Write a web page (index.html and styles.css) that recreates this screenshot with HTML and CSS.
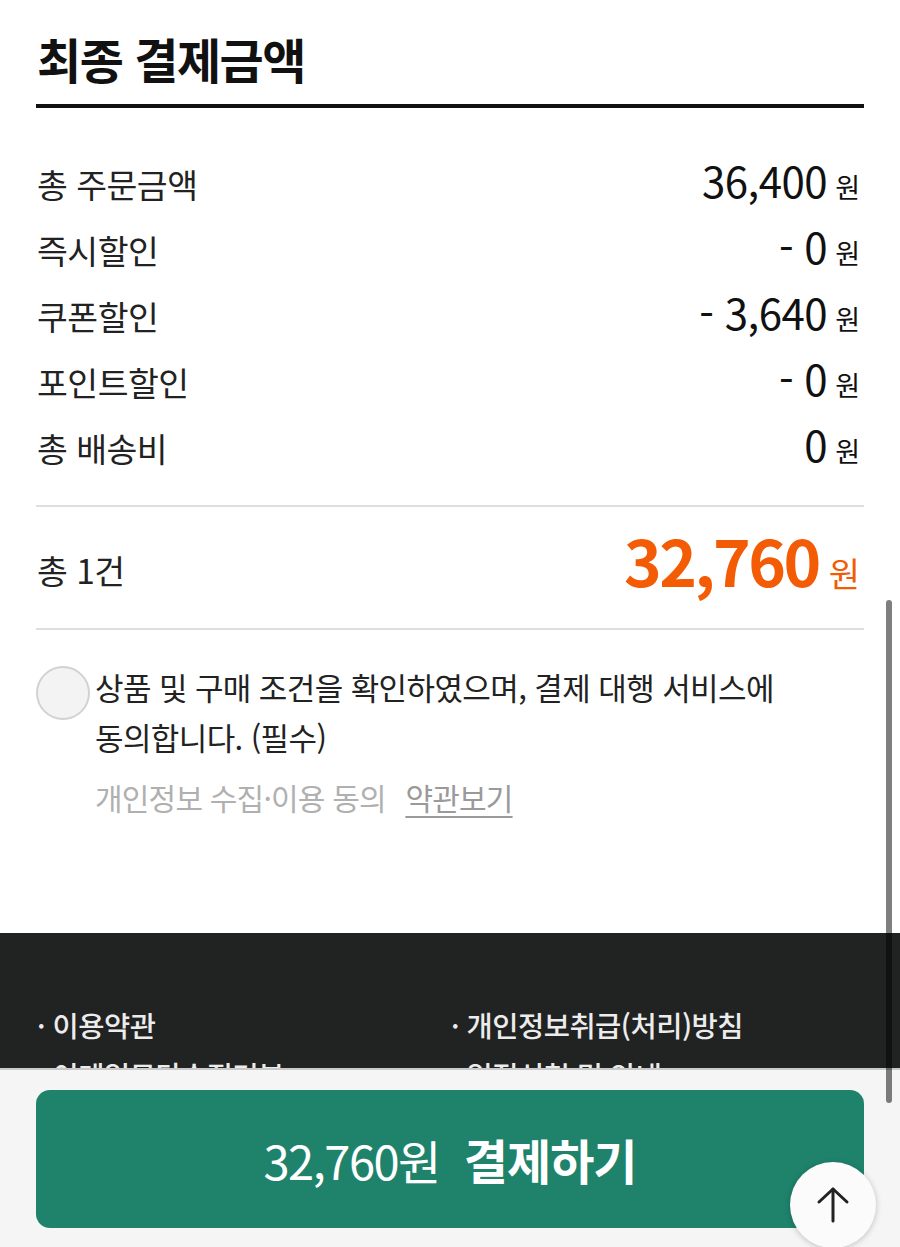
FILE: index.html
```html
<!DOCTYPE html>
<html lang="ko">
<head>
<meta charset="utf-8">
<title>최종 결제금액</title>
<link rel="stylesheet" href="styles.css">
</head>
<body>
<div class="page">
  <main class="main">
    <h1 class="title">최종 결제금액</h1>
    <div class="list">
      <div class="row"><span class="label">총 주문금액</span><span class="value"><span class="num">36,400</span><span class="won">원</span></span></div>
      <div class="row"><span class="label">즉시할인</span><span class="value"><span class="num">- 0</span><span class="won">원</span></span></div>
      <div class="row"><span class="label">쿠폰할인</span><span class="value"><span class="num">- 3,640</span><span class="won">원</span></span></div>
      <div class="row"><span class="label">포인트할인</span><span class="value"><span class="num">- 0</span><span class="won">원</span></span></div>
      <div class="row"><span class="label">총 배송비</span><span class="value"><span class="num">0</span><span class="won">원</span></span></div>
    </div>
    <div class="total">
      <span class="label">총 1건</span>
      <span class="total-value"><span class="total-num">32,760</span><span class="total-won">원</span></span>
    </div>
    <div class="agree">
      <span class="check"></span>
      <div class="agree-body">
        <p class="agree-text">상품 및 구매 조건을 확인하였으며, 결제 대행 서비스에 동의합니다. (필수)</p>
        <p class="privacy">개인정보 수집·이용 동의 <a class="terms" href="#">약관보기</a></p>
      </div>
    </div>
  </main>
  <footer class="footer">
    <ul class="links">
      <li>· 이용약관</li>
      <li>· 개인정보취급(처리)방침</li>
      <li>· 이메일무단수집거부</li>
      <li>· 입점신청 및 안내</li>
    </ul>
  </footer>
  <div class="paybar">
    <button class="pay"><span class="pay-amount">32,760원</span><span class="pay-label">결제하기</span></button>
    <span class="totop">
      <svg width="40" height="40" viewBox="0 0 40 40" fill="none" stroke="#222" stroke-width="3" stroke-linecap="round" stroke-linejoin="round"><path d="M20 4V36"/><path d="M6 17L20 4L34 17"/></svg>
    </span>
  </div>
  <span class="scrollbar"></span>
</div>
</body>
</html>
```
FILE: styles.css
```css
* { box-sizing: border-box; }
html, body { margin: 0; padding: 0; }
body {
  width: 900px;
  height: 1247px;
  overflow: hidden;
  background: #fff;
  font-family: "Noto Sans CJK KR", "Noto Sans", sans-serif;
  color: #1a1a1a;
}
.page { position: relative; width: 900px; height: 1247px; overflow: hidden; }
.main { padding: 0 36px; }
.title {
  margin: 0;
  padding: 28px 0 16px 1px;
  font-size: 48px;
  line-height: 60px;
  font-weight: 700;
  letter-spacing: -1.5px;
  color: #111;
  border-bottom: 4px solid #111;
}
.list {
  padding: 39px 0 28px;
  border-bottom: 2px solid #dedede;
}
.row {
  display: flex;
  justify-content: space-between;
  align-items: baseline;
  height: 66px;
  padding: 0 4px 0 1px;
}
.label { font-size: 33.5px; line-height: 66px; letter-spacing: -0.5px; color: #222; }
.value { font-size: 42px; line-height: 66px; color: #111; }
.num { letter-spacing: -0.5px; }
.won { font-size: 27px; margin-left: 8px; }
.total {
  display: flex;
  justify-content: space-between;
  align-items: center;
  height: 123px;
  padding: 4px 4px 0 1px;
  border-bottom: 2px solid #dedede;
}
.total .label { line-height: 60px; }
.total-value { line-height: 80px; color: #f35b04; white-space: nowrap; }
.total-num { font-size: 64px; font-weight: 700; letter-spacing: -2.5px; }
.total-won { font-size: 34px; margin-left: 10px; }
.agree {
  display: flex;
  padding: 32px 0 111px;
}
.check {
  flex-shrink: 0;
  width: 54px;
  height: 54px;
  margin-top: 4px;
  margin-right: 5px;
  border-radius: 50%;
  border: 2px solid #d2d2d2;
  background: #f3f3f3;
}
.agree-body { flex: 1; }
.agree-text {
  margin: 0;
  font-size: 31px;
  line-height: 50px;
  letter-spacing: -0.6px;
  color: #222;
  width: 720px;
  word-break: keep-all;
}
.privacy {
  margin: 10px 0 0;
  font-size: 30px;
  line-height: 50px;
  letter-spacing: -0.8px;
  color: #b0b0b0;
}
.terms {
  margin-left: 12px;
  color: #9a9a9a;
  text-decoration: underline;
  text-underline-offset: 6px;
  text-decoration-thickness: 2px;
}
.footer {
  background: #212222;
  height: 400px;
  padding: 67px 36px 0;
}
.links {
  list-style: none;
  margin: 0;
  padding: 0;
  display: grid;
  grid-template-columns: 1fr 1fr;
}
.links li {
  font-size: 28.5px;
  line-height: 50px;
  font-weight: 500;
  letter-spacing: -0.5px;
  color: #ececec;
  padding-left: 1px;
}
.paybar {
  position: absolute;
  left: 0;
  right: 0;
  bottom: 0;
  height: 179px;
  background: #f5f5f5;
  border-top: 2px solid #c9c9c9;
  padding: 20px 36px 0;
}
.pay {
  display: flex;
  align-items: center;
  justify-content: center;
  gap: 24px;
  width: 100%;
  height: 138px;
  border: 0;
  border-radius: 14px;
  background: #1f836c;
  color: #fff;
  font-family: "Noto Sans CJK KR", "Noto Sans", sans-serif;
  padding: 0;
}
.pay-amount { font-size: 47px; font-weight: 400; letter-spacing: -1.5px; }
.pay-label { font-size: 48px; font-weight: 700; letter-spacing: -1px; }
.totop {
  position: absolute;
  left: 790px;
  top: 92px;
  width: 86px;
  height: 86px;
  border-radius: 50%;
  background: #fbfbfb;
  box-shadow: 0 1px 6px rgba(0, 0, 0, 0.22);
  display: flex;
  align-items: center;
  justify-content: center;
}
.scrollbar {
  position: absolute;
  left: 886px;
  top: 600px;
  width: 6px;
  height: 503px;
  border-radius: 3px;
  background: rgba(0, 0, 0, 0.5);
  z-index: 10;
}
```
